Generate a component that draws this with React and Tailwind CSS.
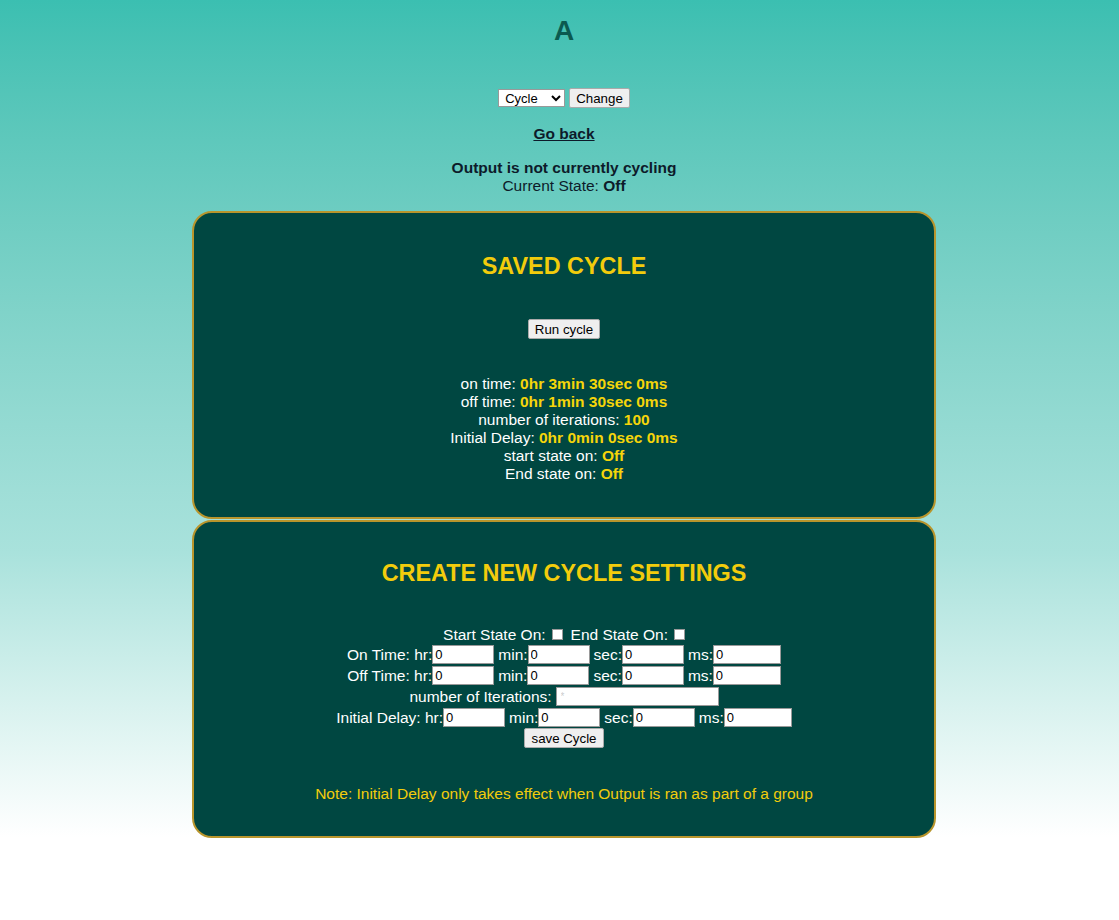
export default function App() {
  const valueCls = "font-bold text-[#f5d50a]";
  const inputCls = "w-[62px] h-[19px] bg-white border border-[#999] text-black text-[13px] px-[2px] leading-none";

  const timeRow = (label, vals) => (
    <div className="flex items-center justify-center h-[21px]">
      <span>{label} hr:</span>
      <input className={inputCls} defaultValue={vals[0]} />
      <span className="ml-[4px]">min:</span>
      <input className={inputCls} defaultValue={vals[1]} />
      <span className="ml-[4px]">sec:</span>
      <input className={inputCls} defaultValue={vals[2]} />
      <span className="ml-[4px]">ms:</span>
      <input className="w-[68px] h-[19px] bg-white border border-[#999] text-black text-[13px] px-[2px] leading-none" defaultValue={vals[3]} />
    </div>
  );

  return (
    <div
      className="min-h-[920px] w-full pl-[9px] bg-gradient-to-b from-[#3bbfb1] via-[#a9e2dc] via-60% to-white to-[91%] text-[15.5px] text-[#0d1b2a]"
      style={{ fontFamily: '"Liberation Sans", Arial, sans-serif' }}
    >
      <div className="flex flex-col items-center pt-[17px]">
        <h1 className="text-[28px] font-bold text-[#0b5a50] leading-[28px]">A</h1>

        <div className="flex items-center gap-[4px] mt-[43px]">
          <select className="w-[67px] h-[18px] bg-white border border-[#999] text-[13px] text-black px-[2px]">
            <option>Cycle</option>
          </select>
          <button className="h-[20px] px-[6px] bg-[#efefef] border border-[#aaa] rounded-[2px] text-[13.3px] text-black">
            Change
          </button>
        </div>

        <a className="mt-[14px] font-bold underline text-[#0d1b2a]">Go back</a>

        <div className="mt-[14px] font-bold leading-[18px]">Output is not currently cycling</div>
        <div className="leading-[18px]">
          Current State: <span className="font-bold">Off</span>
        </div>
      </div>

      <div className="w-[744px] mx-auto mt-[16px] flex flex-col">
        <section className="h-[308px] bg-[#004741] border-2 border-[#b8952c] rounded-[20px] flex flex-col items-center text-white">
          <h2 className="mt-[40px] text-[23.4px] font-bold text-[#f2cc0c] leading-[26px]">SAVED CYCLE</h2>
          <button className="mt-[40px] h-[20px] px-[6px] bg-[#efefef] border border-[#aaa] rounded-[2px] text-[13.3px] text-black">
            Run cycle
          </button>
          <div className="mt-[36px] flex flex-col items-center leading-[18px]">
            <div>on time: <span className={valueCls}>0hr 3min 30sec 0ms</span></div>
            <div>off time: <span className={valueCls}>0hr 1min 30sec 0ms</span></div>
            <div>number of iterations: <span className={valueCls}>100</span></div>
            <div>Initial Delay: <span className={valueCls}>0hr 0min 0sec 0ms</span></div>
            <div>start state on: <span className={valueCls}>Off</span></div>
            <div>End state on: <span className={valueCls}>Off</span></div>
          </div>
        </section>

        <section className="h-[318px] mt-[1px] bg-[#004741] border-2 border-[#b8952c] rounded-[20px] flex flex-col items-center text-white">
          <h2 className="mt-[38px] text-[23.4px] font-bold text-[#f2cc0c] leading-[26px]">CREATE NEW CYCLE SETTINGS</h2>
          <div className="mt-[38px] flex flex-col items-center">
            <div className="flex items-center h-[20px]">
              <span>Start State On:</span>
              <input type="checkbox" className="ml-[6px] w-[11px] h-[11px] appearance-none bg-white border border-[#999]" />
              <span className="ml-[8px]">End State On:</span>
              <input type="checkbox" className="ml-[6px] w-[11px] h-[11px] appearance-none bg-white border border-[#999]" />
            </div>
            {timeRow("On Time:", ["0", "0", "0", "0"])}
            {timeRow("Off Time:", ["0", "0", "0", "0"])}
            <div className="flex items-center h-[21px]">
              <span>number of Iterations:</span>
              <input className="ml-[4px] w-[163px] h-[19px] bg-white border border-[#999] text-[#999] text-[10px] px-[4px]" placeholder="*" />
            </div>
            <div className="flex items-center justify-center h-[21px]">
              <span>Initial Delay: hr:</span>
              <input className={inputCls} defaultValue="0" />
              <span className="ml-[4px]">min:</span>
              <input className={inputCls} defaultValue="0" />
              <span className="ml-[4px]">sec:</span>
              <input className={inputCls} defaultValue="0" />
              <span className="ml-[4px]">ms:</span>
              <input className="w-[68px] h-[19px] bg-white border border-[#999] text-black text-[13px] px-[2px] leading-none" defaultValue="0" />
            </div>
            <button className="h-[20px] px-[6px] bg-[#efefef] border border-[#aaa] rounded-[2px] text-[13.3px] text-black">
              save Cycle
            </button>
          </div>
          <p className="mt-[34px] text-[#f2cc0c]">
            Note: Initial Delay only takes effect when Output is ran as part of a group
          </p>
        </section>
      </div>
    </div>
  );
}
